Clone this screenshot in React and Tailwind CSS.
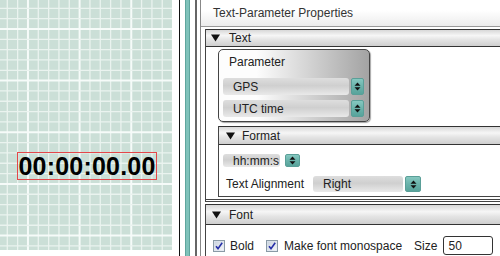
import React from 'react'

const GRID_V = Array.from({ length: 17 }, (_, i) => i)
const GRID_H = Array.from({ length: 24 }, (_, i) => i)

const Grid = () => (
    <svg width="172" height="250" className="block">
        <rect width="172" height="250" fill="#cbdfd7" />
        {GRID_V.map((i) => (
            <line key={'v' + i} x1={7.3 + i * 10.33} x2={7.3 + i * 10.33} y1="0" y2="250"
                stroke={(i - 2) % 5 === 0 ? '#f6fbf9' : '#eaf3ef'} strokeWidth={(i - 2) % 5 === 0 ? 2 : 1.3} />
        ))}
        {GRID_H.map((j) => (
            <line key={'h' + j} y1={8.3 + j * 10.33} y2={8.3 + j * 10.33} x1="0" x2="172"
                stroke={(j - 2) % 5 === 0 ? '#f6fbf9' : '#eaf3ef'} strokeWidth={(j - 2) % 5 === 0 ? 2 : 1.3} />
        ))}
    </svg>
)

const Tri = () => (
    <svg width="9" height="8" viewBox="0 0 9 8" className="shrink-0">
        <path d="M0 0.5H9L4.5 7.5Z" fill="#111" />
    </svg>
)

const Header = ({ label, className }) => (
    <div className={"flex items-center border-y border-[#333] bg-[linear-gradient(#d8d8d8,#f6f6f6_35%,#e4e4e4_60%,#cfcfcf)] text-[12px] text-[#222] " + className}>
        <Tri />
        <span>{label}</span>
    </div>
)

const Spinner = ({ className }) => (
    <div className={"flex items-center justify-center rounded-[2px] border border-[#5a9f98] bg-[linear-gradient(#86c8c0,#6ab3ab_50%,#58a39b)] shrink-0 " + className}>
        <svg width="7" height="9" viewBox="0 0 7 9">
            <path d="M3.5 0.5L6.5 3.8H0.5Z M3.5 8.5L6.5 5.2H0.5Z" fill="#111" />
        </svg>
    </div>
)

const Select = ({ text, width, height, spinW, gap }) => (
    <div className={"flex items-center " + gap}>
        <div className={"flex items-center overflow-hidden whitespace-nowrap rounded-[3px] bg-[linear-gradient(#dedede,#cfcfcf_45%,#e9e9e9)] pl-[10px] text-[12px] text-[#222] " + width + ' ' + height}>
            {text}
        </div>
        <Spinner className={spinW + ' ' + height} />
    </div>
)

const Check = () => (
    <svg width="12" height="12" viewBox="0 0 12 12" className="shrink-0">
        <rect x="0.5" y="0.5" width="11" height="11" fill="#dfe6ef" stroke="#8a9aa6" />
        <rect x="1.5" y="1.5" width="9" height="9" fill="url(#cg)" />
        <defs>
            <linearGradient id="cg" x1="0" y1="0" x2="1" y2="1">
                <stop offset="0" stopColor="#c9d2dd" />
                <stop offset="1" stopColor="#f4f6fa" />
            </linearGradient>
        </defs>
        <path d="M3 6.2L5 8.6L9.2 2.8" stroke="#2630a8" strokeWidth="1.6" fill="none" />
    </svg>
)

export default function App() {
    return (
        <div className="flex h-[256px] w-[500px] overflow-hidden bg-white font-['Liberation_Sans',Arial,sans-serif]">
            <div className="relative h-[250px] w-[172px] shrink-0">
                <Grid />
                <div className="absolute left-[17px] top-[152px] flex h-[28px] w-[140px] items-center justify-center border border-[#e4474a] text-[25px] font-bold leading-none tracking-[0.2px] text-black">
                    00:00:00.00
                </div>
            </div>
            <div className="ml-[7px] w-px shrink-0 bg-[#111]" />
            <div className="ml-[5px] w-[5px] shrink-0 border-x border-[#5fa59d] bg-[#7fc2ba]" />
            <div className="ml-[5px] w-[2px] shrink-0 bg-[#666]" />
            <div className="ml-[3px] w-px shrink-0 bg-[#888]" />

            <div className="flex min-w-0 flex-1 flex-col">
                <div className="flex h-[27px] shrink-0 items-center border-b border-[#999] bg-[linear-gradient(#ffffff_40%,#ececec)] pl-[12px] text-[12px] text-[#333]">
                    Text-Parameter Properties
                </div>

                <div className="ml-[4px] mt-[2px] border-b-[3px] border-l border-double border-[#444]">
                    <Header label="Text" className="h-[18px] gap-[9px] pl-[5px]" />
                    <div className="pb-[2px] pl-[12px] pt-[2px]">
                        <div className="h-[73px] w-[152px] rounded-[5px] border border-[#444] bg-[linear-gradient(90deg,#fdfdfd_25%,#a3a3a3)] shadow-[1px_1px_1px_rgba(0,0,0,0.35)]">
                            <div className="pl-[10px] pt-[5px] text-[12px] leading-[14px] text-[#222]">Parameter</div>
                            <div className="mt-[9px] flex flex-col gap-[5px] pl-[4px]">
                                <Select text="GPS" width="w-[126px]" height="h-[17px]" spinW="w-[13px]" gap="gap-[2px]" />
                                <Select text="UTC time" width="w-[126px]" height="h-[17px]" spinW="w-[13px]" gap="gap-[2px]" />
                            </div>
                        </div>

                        <div className="mt-[4px] border-b border-l border-[#444]">
                            <Header label="Format" className="h-[19px] gap-[7px] pl-[7px]" />
                            <div className="pb-[3px] pl-[4px] pt-[9px]">
                                <Select text="hh:mm:s" width="w-[57px]" height="h-[13px]" spinW="w-[15px]" gap="gap-[5px]" />
                                <div className="mt-[8px] flex items-center text-[12px] text-[#222]">
                                    <span className="ml-[3px] w-[87px]">Text Alignment</span>
                                    <Select text="Right" width="w-[90px]" height="h-[16px]" spinW="w-[16px]" gap="gap-[2px]" />
                                </div>
                            </div>
                        </div>
                    </div>
                </div>

                <div className="ml-[4px] mt-[2px] flex-1 border-l border-[#444]">
                    <Header label="Font" className="h-[21px] gap-[8px] pl-[6px]" />
                    <div className="flex items-center pl-[7px] pt-[11px] text-[12px] text-[#222]">
                        <Check />
                        <span className="ml-[5px]">Bold</span>
                        <span className="ml-[12px]"><Check /></span>
                        <span className="ml-[6px]">Make font monospace</span>
                        <span className="ml-[12px]">Size</span>
                        <div className="ml-[6px] flex h-[19px] w-[50px] items-center rounded-[3px] border border-[#333] pl-[4px]">50</div>
                    </div>
                </div>
            </div>
        </div>
    )
}
